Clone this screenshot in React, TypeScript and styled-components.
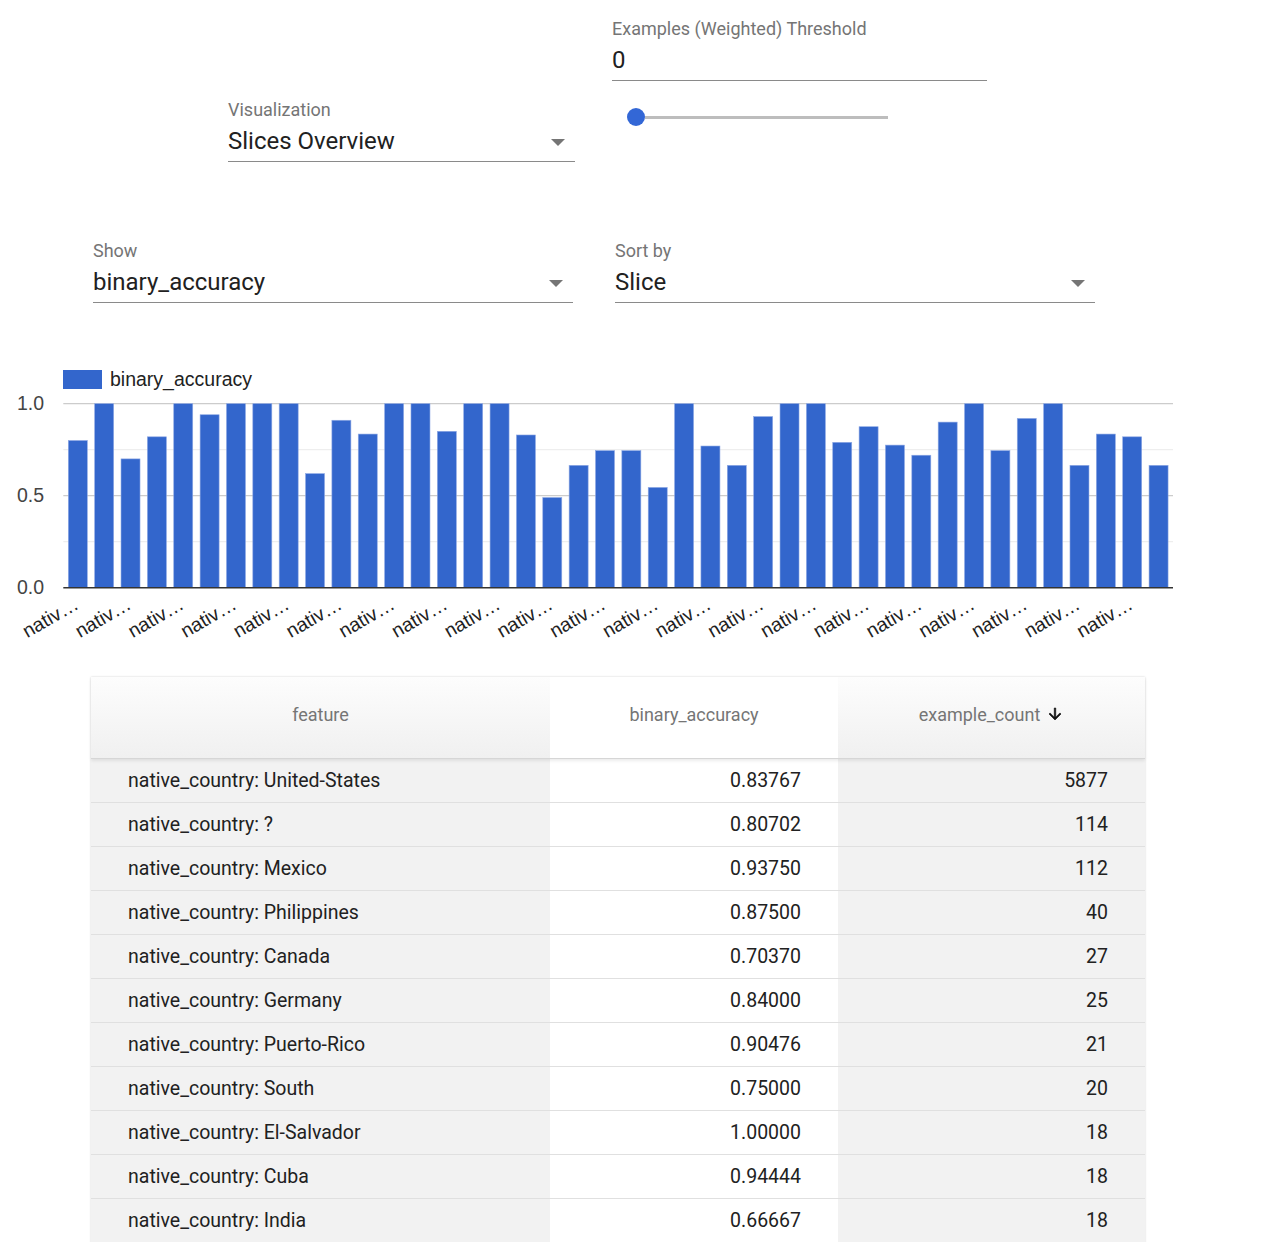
import React from "react";
import styled, { createGlobalStyle } from "styled-components";

const Global = createGlobalStyle`
  html, body { margin: 0; padding: 0; background: #fff; }
  body { font-family: Roboto, "Noto Sans", sans-serif; color: #212121; }
`;

const Page = styled.div`
  width: 1262px;
  height: 1242px;
  overflow: hidden;
`;

const TopRow = styled.div`
  display: flex;
  align-items: flex-start;
  padding: 19px 0 0 228px;
`;

const FilterRow = styled.div`
  display: flex;
  gap: 42px;
  padding-left: 93px;
  margin-top: 79px;
`;

const Field = styled.div<{ $width: number; $top?: number }>`
  width: ${(p) => p.$width}px;
  margin-top: ${(p) => p.$top ?? 0}px;
  display: flex;
  flex-direction: column;
`;

const Label = styled.div`
  font-size: 18px;
  line-height: 20px;
  color: #757575;
`;

const ValueRow = styled.div`
  margin-top: 6px;
  padding-bottom: 5px;
  border-bottom: 1px solid #8a8a8a;
  display: flex;
  align-items: center;
  justify-content: space-between;
  height: 30px;
`;

const Value = styled.span`
  font-size: 24px;
  line-height: 30px;
  color: #212121;
`;

const Caret = styled.span`
  width: 0;
  height: 0;
  border-left: 7px solid transparent;
  border-right: 7px solid transparent;
  border-top: 7px solid #757575;
  margin-right: 10px;
  margin-top: 2px;
`;

const ThresholdBlock = styled.div`
  width: 375px;
  margin-left: 37px;
  display: flex;
  flex-direction: column;
`;

const Slider = styled.div`
  margin-top: 26px;
  margin-left: 15px;
  width: 261px;
  height: 20px;
  display: flex;
  align-items: center;
`;

const Thumb = styled.div`
  width: 18px;
  height: 18px;
  border-radius: 50%;
  background: #3367d6;
  flex: none;
`;

const Track = styled.div`
  flex: 1;
  height: 3px;
  background: #bdbdbd;
`;

const ChartSvg = styled.svg`
  display: block;
  margin-top: 48px;
`;

const Table = styled.div`
  margin: 36px 0 0 91px;
  width: 1054px;
  box-shadow: 0 0 2px rgba(0, 0, 0, 0.18);
`;

const Row = styled.div`
  display: grid;
  grid-template-columns: 459px 288px 307px;
`;

const HeaderRow = styled(Row)`
  height: 81px;
  border-bottom: 1px solid #d6d6d6;
  box-shadow: 0 2px 3px rgba(0, 0, 0, 0.08);
  position: relative;
  z-index: 1;
`;

const HeadCell = styled.div<{ $shaded?: boolean }>`
  display: flex;
  align-items: center;
  justify-content: center;
  gap: 6px;
  padding-bottom: 7px;
  font-size: 18px;
  color: #757575;
  background: ${(p) => (p.$shaded ? "linear-gradient(#fdfdfd, #f0f0f0)" : "#fff")};
`;

const BodyRow = styled(Row)`
  height: 43px;
  border-bottom: 1px solid #e0e0e0;
`;

const Cell = styled.div<{ $shaded?: boolean; $right?: boolean }>`
  display: flex;
  align-items: center;
  justify-content: ${(p) => (p.$right ? "flex-end" : "flex-start")};
  padding: 0 37px 1px;
  font-size: 19.5px;
  color: #212121;
  background: ${(p) => (p.$shaded ? "#f2f2f2" : "#fff")};
`;

const values = [
  0.8, 1, 0.7, 0.82, 1, 0.94, 1, 1, 1, 0.62, 0.91, 0.835, 1, 1, 0.85, 1, 1, 0.83, 0.49, 0.665,
  0.745, 0.745, 0.545, 1, 0.77, 0.665, 0.93, 1, 1, 0.79, 0.875, 0.775, 0.72, 0.9, 1, 0.745,
  0.92, 1, 0.665, 0.835, 0.82, 0.665,
];

const rows: [string, string, string][] = [
  ["United-States", "0.83767", "5877"],
  ["?", "0.80702", "114"],
  ["Mexico", "0.93750", "112"],
  ["Philippines", "0.87500", "40"],
  ["Canada", "0.70370", "27"],
  ["Germany", "0.84000", "25"],
  ["Puerto-Rico", "0.90476", "21"],
  ["South", "0.75000", "20"],
  ["El-Salvador", "1.00000", "18"],
  ["Cuba", "0.94444", "18"],
  ["India", "0.66667", "18"],
];

const OY = 350;
const top = 402.7 - OY;
const base = 586.7 - OY;
const h = base - top;
const left = 63.3;
const right = 1173;
const step = 26.36;

function Chart() {
  const font = '"Liberation Sans", Arial, sans-serif';
  return (
    <ChartSvg width={1262} height={290}>
      <rect x={63} y={369 - OY} width={39} height={19} fill="#3366cc" />
      <text x={110} y={385 - OY} fontFamily={font} fontSize={19.5} fill="#222">
        binary_accuracy
      </text>
      {[0.25, 0.75].map((v) => (
        <line key={v} x1={left} x2={right} y1={base - v * h} y2={base - v * h} stroke="#ebebeb" strokeWidth={1} />
      ))}
      {[0.5, 1].map((v) => (
        <line key={v} x1={left} x2={right} y1={base - v * h} y2={base - v * h} stroke="#cccccc" strokeWidth={1.2} />
      ))}
      {["1.0", "0.5", "0.0"].map((t, i) => (
        <text key={t} x={44} y={top + i * (h / 2) + 6} textAnchor="end" fontFamily={font} fontSize={19.5} fill="#444">
          {t}
        </text>
      ))}
      {values.map((v, i) => {
        const x = 68.3 + i * step;
        const y = base - v * h;
        return (
          <rect key={i} x={x} y={y} width={19} height={base - y} fill="#3366cc" stroke="#8fa9e4" strokeWidth={0.6} />
        );
      })}
      <line x1={left} x2={right} y1={base} y2={base} stroke="#333" strokeWidth={1.4} />
      {values.map((_, i) => {
        if (i % 2 !== 0) return null;
        const cx = 68.3 + i * step + 9.5 + 2;
        const cy = 607 - OY;
        return (
          <text
            key={i}
            x={cx}
            y={cy}
            textAnchor="end"
            transform={`rotate(-30 ${cx} ${cy})`}
            fontFamily={font}
            fontSize={19.5}
            fill="#222"
          >
            nativ…
          </text>
        );
      })}
    </ChartSvg>
  );
}

const ArrowDown = () => (
  <svg width="18" height="18" viewBox="0 0 24 24" fill="#111">
    <path d="M20 12l-1.41-1.41L13 16.17V4h-2v12.17l-5.58-5.59L4 12l8 8 8-8z" stroke="#111" strokeWidth="0.8" />
  </svg>
);

export default function App() {
  return (
    <Page>
      <Global />
      <TopRow>
        <Field $width={347} $top={81}>
          <Label>Visualization</Label>
          <ValueRow>
            <Value>Slices Overview</Value>
            <Caret />
          </ValueRow>
        </Field>
        <ThresholdBlock>
          <Label>Examples (Weighted) Threshold</Label>
          <ValueRow>
            <Value>0</Value>
          </ValueRow>
          <Slider>
            <Thumb />
            <Track />
          </Slider>
        </ThresholdBlock>
      </TopRow>
      <FilterRow>
        <Field $width={480}>
          <Label>Show</Label>
          <ValueRow>
            <Value>binary_accuracy</Value>
            <Caret />
          </ValueRow>
        </Field>
        <Field $width={480}>
          <Label>Sort by</Label>
          <ValueRow>
            <Value>Slice</Value>
            <Caret />
          </ValueRow>
        </Field>
      </FilterRow>
      <Chart />
      <Table>
        <HeaderRow>
          <HeadCell $shaded>feature</HeadCell>
          <HeadCell>binary_accuracy</HeadCell>
          <HeadCell $shaded>
            example_count
            <ArrowDown />
          </HeadCell>
        </HeaderRow>
        {rows.map(([c, a, n]) => (
          <BodyRow key={c}>
            <Cell $shaded>native_country: {c}</Cell>
            <Cell $right>{a}</Cell>
            <Cell $shaded $right>
              {n}
            </Cell>
          </BodyRow>
        ))}
      </Table>
    </Page>
  );
}
